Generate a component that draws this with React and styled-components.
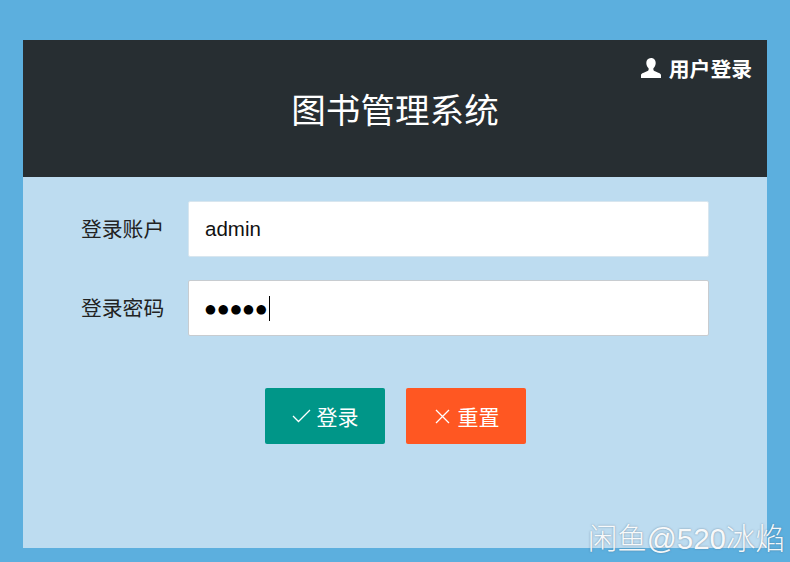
import styled, { createGlobalStyle } from 'styled-components';

const GlobalStyle = createGlobalStyle`
    html, body {
        margin: 0;
        padding: 0;
        height: 100%;
        background: #5cafde;
        font-family: "Liberation Sans", "Noto Sans CJK SC", sans-serif;
    }
`;

function UserIcon() {
    return (
        <svg width="20" height="20" viewBox="0 0 20 20">
            <path
                fill="#fff"
                d="M10 0c-3.100 0-4.700 2.200-4.700 5 0 2.200 1 4.200 2.300 5.200v1.600c0 .7-.6 1.100-1.600 1.500C3 14.600 0 15.600 0 17.200V20h20v-2.800c0-1.600-3-2.600-6-3.900-1-.4-1.600-.8-1.600-1.500v-1.600c1.300-1 2.300-3 2.300-5.200 0-2.800-1.600-5-4.700-5z"
            />
        </svg>
    );
}

function CheckIcon() {
    return (
        <svg width="19" height="14" viewBox="0 0 19 14">
            <path d="M1 7l5.500 5.500L18 1" fill="none" stroke="#fff" strokeWidth="1.3" />
        </svg>
    );
}

function CloseIcon() {
    return (
        <svg width="19" height="15" viewBox="-2 0 19 15">
            <path d="M1 1l13 13M14 1L1 14" fill="none" stroke="#fff" strokeWidth="1.3" />
        </svg>
    );
}

function App() {
    return (
        <Page>
            <GlobalStyle />
            <Panel>
                <Header>
                    <UserBadge>
                        <UserIcon />
                        用户登录
                    </UserBadge>
                    <Title>图书管理系统</Title>
                </Header>
                <Form>
                    <Row>
                        <Label>登录账户</Label>
                        <InputBox>admin</InputBox>
                    </Row>
                    <Row>
                        <Label>登录密码</Label>
                        <InputBox $focused>
                            <Dots>●●●●●</Dots>
                            <Caret />
                        </InputBox>
                    </Row>
                    <Actions>
                        <Button $color="#009688">
                            <CheckIcon />
                            登录
                        </Button>
                        <Button $color="#ff5722">
                            <CloseIcon />
                            重置
                        </Button>
                    </Actions>
                </Form>
            </Panel>
            <Watermark>闲鱼@520冰焰</Watermark>
        </Page>
    );
}

export default App;

const Page = styled.div`
    position: relative;
    width: 790px;
    height: 562px;
    padding: 40px 23px 14px;
    box-sizing: border-box;
    overflow: hidden;
    background: #5cafde;
`;

const Panel = styled.div`
    display: flex;
    flex-direction: column;
    height: 100%;
    background: #bddcf0;
`;

const Header = styled.div`
    display: flex;
    flex-direction: column;
    height: 137px;
    padding: 16px 15px 0 0;
    box-sizing: border-box;
    background: #272e32;
    color: #fff;
`;

const UserBadge = styled.div`
    display: flex;
    align-self: flex-end;
    align-items: center;
    gap: 8px;
    height: 24px;
    font-size: 20.8px;
    font-weight: 700;
`;

const Title = styled.h1`
    margin: 9px 0 0 15px;
    font-size: 34.6px;
    line-height: 44px;
    font-weight: 400;
    text-align: center;
`;

const Form = styled.div`
    display: flex;
    flex-direction: column;
    gap: 23px;
    padding: 24px 58px 0 58px;
`;

const Row = styled.div`
    display: flex;
    align-items: center;
    gap: 24px;
`;

const Label = styled.div`
    width: 83px;
    padding-bottom: 2px;
    font-size: 20.8px;
    color: #222;
    white-space: nowrap;
`;

const InputBox = styled.div`
    display: flex;
    align-items: center;
    flex: 1;
    height: 56px;
    padding: 0 16px;
    box-sizing: border-box;
    background: #fff;
    border: 1px solid ${(props) => (props.$focused ? '#c8ccd0' : '#d8e6ef')};
    border-radius: 2px;
    font-size: 20.5px;
    color: #111;
`;

const Dots = styled.span`
    font-family: "DejaVu Sans", sans-serif;
    font-size: 12.5px;
    letter-spacing: 1.8px;
    color: #000;
`;

const Caret = styled.span`
    width: 1.5px;
    height: 25px;
    background: #000;
`;

const Actions = styled.div`
    display: flex;
    justify-content: center;
    gap: 21px;
    margin-top: 29px;
    margin-left: 1px;
`;

const Button = styled.div`
    display: flex;
    align-items: center;
    justify-content: center;
    gap: 6px;
    width: 120px;
    height: 56px;
    background: ${(props) => props.$color};
    border-radius: 2px;
    color: #fff;
    font-size: 21px;
`;

const Watermark = styled.div`
    position: absolute;
    right: 5px;
    bottom: 6px;
    font-size: 29.5px;
    line-height: 34px;
    font-weight: 300;
    color: rgba(255, 255, 255, 0.95);
    text-shadow: 0 0 2px rgba(70, 90, 110, 0.6);
    white-space: nowrap;
`;
